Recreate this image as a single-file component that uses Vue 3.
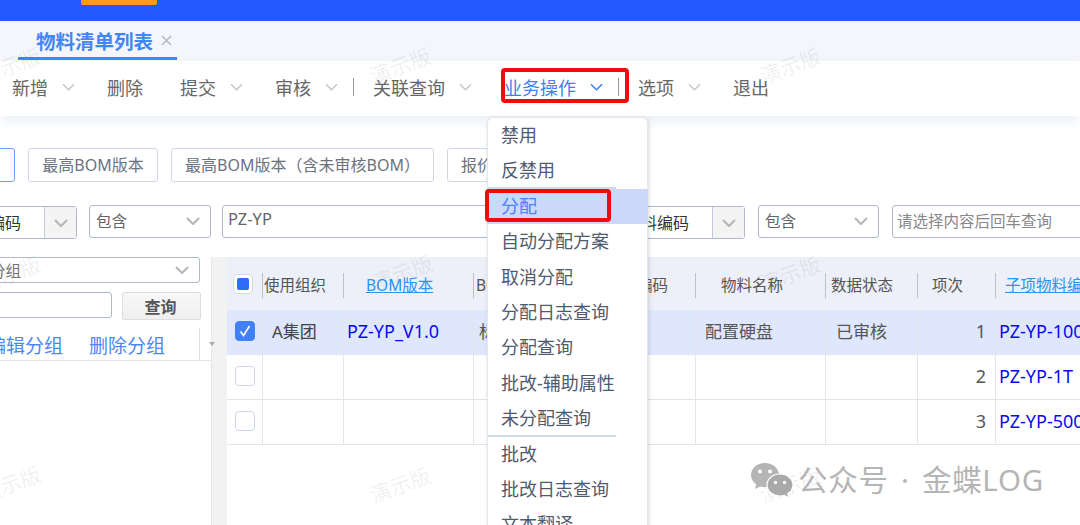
<script setup>
const toolbar = [
  { label: '新增', arrow: true },
  { label: '删除', plain: true },
  { label: '提交', arrow: true },
  { label: '审核', arrow: true, sep: true },
  { label: '关联查询', arrow: true },
  { label: '业务操作', arrow: true, active: true, sep: true },
  { label: '选项', arrow: true },
  { label: '退出' },
]

const menu = [
  { label: '禁用' },
  { label: '反禁用', line: true },
  { label: '分配', hover: true },
  { label: '自动分配方案' },
  { label: '取消分配' },
  { label: '分配日志查询' },
  { label: '分配查询' },
  { label: '批改-辅助属性' },
  { label: '未分配查询', line: true },
  { label: '批改' },
  { label: '批改日志查询' },
  { label: '文本翻译' },
]

const columns = [
  { key: 'check', width: 35 },
  { key: 'org', width: 81, title: '使用组织', pad: 2 },
  { key: 'bom', width: 130, title: 'BOM版本', pad: 23, link: true },
  { key: 'name1', width: 127, title: 'BOM简称', pad: 3 },
  { key: 'code', width: 95, title: '物料编码', pad: 6 },
  { key: 'name', width: 130, title: '物料名称', pad: 26 },
  { key: 'status', width: 92, title: '数据状态', pad: 6 },
  { key: 'seq', width: 78, title: '项次', pad: 15 },
  { key: 'child', width: 200, title: '子项物料编码', pad: 10, link: true },
]

const rows = [
  { id: 1, checked: true, org: 'A集团', bom: 'PZ-YP_V1.0', name1: '标准', name: '配置硬盘', status: '已审核', child: 'PZ-YP-100G' },
  { id: 2, child: 'PZ-YP-1T' },
  { id: 3, child: 'PZ-YP-500G' },
]

const marks = [
  [10, 65], [400, 65], [790, 65],
  [10, 273], [402, 272], [790, 273],
  [10, 483], [400, 484], [790, 484],
]
</script>

<template>
  <div class="page">
    <header class="topbar"><div class="topbar-tag" /></header>

    <div class="tabs">
      <div class="tab">
        <span>物料清单列表</span>
        <svg class="tab-close" width="11" height="11" viewBox="0 0 11 11"><path d="M1 1l9 9M10 1l-9 9" /></svg>
      </div>
    </div>

    <nav class="toolbar">
      <template v-for="item in toolbar" :key="item.label">
        <div class="tool" :class="{ active: item.active, plain: item.plain, 'has-sep': item.sep }">
          <span>{{ item.label }}</span>
          <svg v-if="item.arrow" class="chev" width="13" height="8" viewBox="0 0 14 8"><path d="M1 1l6 6 6-6" /></svg>
        </div>
        <i v-if="item.sep" class="tool-sep" />
      </template>
    </nav>

    <div class="btn-row">
      <button class="btn btn-first" />
      <button class="btn btn-top">最高BOM版本</button>
      <button class="btn btn-wide">最高BOM版本（含未审核BOM）</button>
      <button class="btn">报价BOM版本</button>
    </div>

    <div class="filter-row">
      <div class="field field-code">
        <span>物料编码</span>
        <div class="field-arrow"><svg class="chev-sm" width="14" height="8" viewBox="0 0 14 8"><path d="M1 1l6 6 6-6" /></svg></div>
      </div>
      <div class="field field-op">
        <span>包含</span>
        <svg class="chev-sm" width="14" height="8" viewBox="0 0 14 8"><path d="M1 1l6 6 6-6" /></svg>
      </div>
      <div class="field field-value"><span>PZ-YP</span></div>
      <div class="field field-code">
        <span>物料编码</span>
        <div class="field-arrow"><svg class="chev-sm" width="14" height="8" viewBox="0 0 14 8"><path d="M1 1l6 6 6-6" /></svg></div>
      </div>
      <div class="field field-op field-op2">
        <span>包含</span>
        <svg class="chev-sm" width="14" height="8" viewBox="0 0 14 8"><path d="M1 1l6 6 6-6" /></svg>
      </div>
      <div class="field field-search"><span>请选择内容后回车查询</span></div>
    </div>

    <div class="body-row">
      <aside class="side">
        <div class="side-select">
          <span>物料分组</span>
          <svg class="chev-sm" width="14" height="8" viewBox="0 0 14 8"><path d="M1 1l6 6 6-6" /></svg>
        </div>
        <div class="side-query">
          <div class="side-input" />
          <button class="side-btn">查询</button>
        </div>
        <div class="side-links">
          <a>编辑分组</a>
          <a>删除分组</a>
          <i class="side-grip" />
          <i class="side-tri" />
        </div>
      </aside>

      <div class="gutter" />

      <div class="grid-wrap">
        <table class="grid">
          <colgroup>
            <col v-for="c in columns" :key="c.key" :style="{ width: c.width + 'px' }" />
          </colgroup>
          <thead>
            <tr>
              <th v-for="c in columns" :key="c.key" :style="{ paddingLeft: (c.pad || 0) + 'px' }">
                <span v-if="c.key === 'check'" class="check-head"><i /></span>
                <span v-else :class="{ 'th-link': c.link }">{{ c.title }}</span>
              </th>
            </tr>
          </thead>
          <tbody>
            <tr v-for="r in rows" :key="r.id" :class="{ selected: r.checked }">
              <td class="td-check">
                <span class="check" :class="{ on: r.checked }">
                  <svg v-if="r.checked" width="14" height="14" viewBox="0 0 14 14"><path d="M2.5 7.500l3 4 6-9.500" /></svg>
                </span>
              </td>
              <td class="td-org">{{ r.org }}</td>
              <td class="td-bom">{{ r.bom }}</td>
              <td class="td-name1">{{ r.name1 }}</td>
              <td />
              <td class="td-name">{{ r.name }}</td>
              <td class="td-status">{{ r.status }}</td>
              <td class="td-seq">{{ r.id }}</td>
              <td class="td-child">{{ r.child }}</td>
            </tr>
          </tbody>
        </table>
      </div>
    </div>

    <ul class="menu">
      <li v-for="m in menu" :key="m.label" :class="{ hover: m.hover, line: m.line }">{{ m.label }}</li>
    </ul>

    <span
      v-for="(p, i) in marks"
      :key="i"
      class="mark"
      :style="{ left: p[0] + 'px', top: p[1] + 'px' }"
    >演示版</span>

    <i class="annot annot-tool" />
    <i class="annot annot-menu" />

    <div class="wechat">
      <svg width="44" height="36" viewBox="0 0 44 36">
        <path class="bubble" d="M15 1C7 1 1 6.500 1 13c0 3.800 2 7 5.300 9.300L5 27l5.300-2.600c1.500.4 3 .6 4.700.6 7.500 0 14-5.300 14-12S22.800 1 15 1z" />
        <circle class="eye" cx="10" cy="9.500" r="2" />
        <circle class="eye" cx="20" cy="9.500" r="2" />
        <path class="bubble bubble-front" d="M30 12c-7.200 0-13 4.800-13 11s5.800 11 13 11c1.500 0 3-.2 4.300-.6L39 36l-1.200-4.300C41 29.700 43 26.500 43 23c0-6.200-5.800-11-13-11z" />
        <circle class="eye" cx="25.500" cy="20.500" r="1.700" />
        <circle class="eye" cx="34.500" cy="20.500" r="1.700" />
      </svg>
      <span>公众号 · 金蝶LOG</span>
    </div>
  </div>
</template>

<style>
html, body { margin: 0; background: #fff; }
</style>

<style scoped>
.page {
  position: relative;
  display: flex;
  flex-direction: column;
  width: 1080px;
  height: 525px;
  overflow: hidden;
  background: #fff;
  color: #555;
  font-family: "Noto Sans", "Noto Sans CJK SC", sans-serif;
}

.topbar { flex: none; height: 21px; padding-left: 81px; background: #2459ff; box-sizing: border-box; }
.topbar-tag { width: 76px; height: 5px; background: #ff9a1a; border-radius: 0 0 2px 2px; }

.tabs { flex: none; height: 40px; background: #f4f6fb; }
.tab {
  display: flex;
  align-items: center;
  gap: 8px;
  box-sizing: border-box;
  width: 159px;
  height: 39px;
  margin-left: 18px;
  padding: 3px 0 0 18px;
  border-bottom: 3px solid #4285f4;
  color: #4285f4;
  font-size: 19.500px;
  font-weight: 700;
  white-space: nowrap;
}
.tab-close { flex: none; }
.tab-close path { fill: none; stroke: #b4b8c2; stroke-width: 1.500; }

.toolbar {
  position: relative;
  z-index: 1;
  flex: none;
  display: flex;
  align-items: center;
  box-sizing: border-box;
  height: 55px;
  padding: 0 0 4px 12px;
  background: #fff;
  box-shadow: 0 6px 10px rgba(190, 203, 232, 0.28);
  font-size: 18px;
  color: #666;
}
.tool { display: flex; align-items: center; margin-right: 32px; white-space: nowrap; }
.tool.plain { margin-right: 37px; }
.tool.has-sep { margin-right: 15px; }
.tool.active { color: #3f7ff5; }
.chev { margin-left: 14px; }
.chev path { fill: none; stroke: #c2c6ce; stroke-width: 1.600; }
.tool.active .chev path { stroke: #3f7ff5; }
.tool-sep { width: 1px; height: 18px; margin-right: 19px; background: #999; }

.btn-row {
  flex: none;
  display: flex;
  gap: 13px;
  height: 34px;
  margin: 32px 0 0 -40px;
}
.btn {
  flex: none;
  box-sizing: border-box;
  height: 34px;
  padding: 0 13px 2px;
  background: #fff;
  border: 1px solid #cfd7e6;
  border-radius: 3px;
  color: #6b7280;
  font: 16px "Noto Sans", "Noto Sans CJK SC", sans-serif;
  white-space: nowrap;
}
.btn-first { width: 55px; border-color: #6d9cf5; }
.btn-top { width: 130px; padding: 0 0 2px; }
.btn-wide { width: 263px; padding: 0 0 2px; }

.filter-row {
  flex: none;
  display: flex;
  gap: 12px;
  height: 33px;
  margin: 23px 0 0 -50px;
}
.field {
  flex: none;
  display: flex;
  align-items: center;
  box-sizing: border-box;
  height: 33px;
  padding: 0 0 2px 6px;
  background: #fff;
  border: 1px solid #b0b8cc;
  border-radius: 3px;
  font-size: 15.500px;
  color: #666;
  white-space: nowrap;
}
.field-code { position: relative; width: 127px; margin-top: 1px; color: #333; font-size: 16px; }
.field-arrow {
  position: absolute;
  top: 0;
  right: 0;
  bottom: 0;
  display: flex;
  align-items: center;
  justify-content: center;
  width: 31px;
  background: #f4f4f4;
  border-left: 1px solid #c6ccdb;
}
.field-op { justify-content: space-between; width: 122px; padding-right: 10px; }
.field-op2 { width: 121px; margin-left: 1px; }
.field-value { width: 384px; margin-left: -1px; padding: 0 0 6px 5px; font-size: 16.500px; }
.field-search { flex: 1; min-width: 200px; margin-left: 1px; padding-left: 4px; color: #888; }
.chev-sm path { fill: none; stroke: #b8b8b8; stroke-width: 2.200; }

.body-row { flex: 1; display: flex; min-height: 0; margin-top: 19px; }

.side { flex: none; position: relative; width: 211px; background: #fff; }
.side-select {
  display: flex;
  align-items: center;
  justify-content: space-between;
  box-sizing: border-box;
  width: 250px;
  height: 26px;
  margin-left: -50px;
  padding: 0 10px 0 8px;
  background: #fff;
  border: 1px solid #b0b8cc;
  border-radius: 3px;
  font-size: 15.500px;
  color: #777;
}
.side-query { display: flex; gap: 10px; margin: 9px 0 0 -50px; }
.side-input {
  flex: none;
  box-sizing: border-box;
  width: 162px;
  height: 26px;
  border: 1px solid #b0b8cc;
  border-radius: 3px;
}
.side-btn {
  flex: none;
  box-sizing: border-box;
  width: 79px;
  height: 28px;
  padding: 0 2px 0 0;
  background: linear-gradient(#f8f8f8, #efefef);
  border: 1px solid #ddd;
  border-radius: 2px;
  color: #555;
  font: 700 16px "Noto Sans", "Noto Sans CJK SC", sans-serif;
}
.side-links {
  position: relative;
  display: flex;
  align-items: center;
  gap: 26px;
  box-sizing: border-box;
  width: 224px;
  height: 33px;
  margin: 8px 0 0 -13px;
  padding-top: 2px;
  border-bottom: 1px solid #e4e4e4;
  color: #4b87f8;
  font-size: 19px;
  white-space: nowrap;
}
.side-grip { position: absolute; left: 212px; top: 0; bottom: 0; width: 1px; background: #e0e0e0; }
.side-tri { position: absolute; left: 222px; top: 14px; width: 0; height: 0; border: 3px solid transparent; border-top: 4px solid #aaa; border-bottom: 0; }

.gutter { flex: none; box-sizing: border-box; width: 16px; background: #f2f2f2; border-left: 1px solid #e6e6e6; }

.grid-wrap { flex: 1; min-width: 0; overflow: hidden; }
.grid {
  width: 968px;
  table-layout: fixed;
  border-collapse: separate;
  border-spacing: 0;
}
.grid th {
  position: relative;
  box-sizing: border-box;
  height: 53px;
  padding: 2px 0 0;
  background: #edf0f8;
  color: #555;
  font-size: 15.500px;
  font-weight: 400;
  text-align: left;
  white-space: nowrap;
  overflow: hidden;
}
.grid th + th::before {
  content: "";
  position: absolute;
  left: 0;
  top: 16px;
  width: 1px;
  height: 25px;
  background: #bcc0c8;
}
.th-link { color: #2b93f0; text-decoration: underline; }
.grid td {
  box-sizing: border-box;
  height: 45px;
  padding: 0 0 3px;
  border-bottom: 1px solid #e4e4e4;
  font-size: 17px;
  color: #555;
  white-space: nowrap;
  overflow: hidden;
}
.grid td + td { border-left: 1px solid #e6e6e6; }
.grid tr.selected td { background: #dfe7fd; border-bottom-color: #dfe7fd; }
.check-head {
  display: flex;
  align-items: center;
  justify-content: center;
  box-sizing: border-box;
  width: 20px;
  height: 20px;
  margin: -2px 0 0 6px;
  background: #fff;
  border: 1px solid #d4dbe8;
  border-radius: 4px;
}
.check-head i { width: 12px; height: 12px; background: #2f6df6; border-radius: 2px; }
.check {
  display: flex;
  align-items: center;
  justify-content: center;
  box-sizing: border-box;
  width: 20px;
  height: 20px;
  margin-left: 8px;
  background: #fff;
  border: 1px solid #cdd6e8;
  border-radius: 4px;
}
.check.on { background: #4080f8; border-color: #4080f8; }
.check path { fill: none; stroke: #fff; stroke-width: 1.600; }
.grid td.td-org { padding-left: 9px; color: #444; }
.grid td.td-bom { padding-left: 3px; color: #0a0af0; font-size: 18px; }
.grid td.td-name1 { padding-left: 5px; }
.grid td.td-name { padding-left: 9px; }
.grid td.td-status { padding-left: 10px; }
.grid td.td-seq { padding-right: 9px; text-align: right; font-size: 18px; }
.grid td.td-child { padding-left: 3px; color: #0a0af0; font-size: 18px; }

.menu {
  position: absolute;
  z-index: 3;
  left: 487px;
  top: 117px;
  box-sizing: border-box;
  width: 161px;
  height: 440px;
  margin: 0;
  padding: 0;
  list-style: none;
  background: #fff;
  border: 1px solid #e4e7ee;
  border-radius: 6px;
  box-shadow: 1px 1px 4px rgba(120, 130, 150, 0.3);
  color: #505a6e;
  font-size: 18px;
}
.menu li {
  position: relative;
  height: 35.400px;
  line-height: 34px;
  padding-left: 13px;
  white-space: nowrap;
}
.menu li.hover { margin: 0 -1px; padding-left: 14px; background: #cbd8fb; color: #4a80f8; line-height: 35.400px; }
.menu li.line::after {
  content: "";
  position: absolute;
  left: 0;
  bottom: 0;
  width: 128px;
  height: 2px;
  background: #d5dae8;
}

.mark {
  position: absolute;
  z-index: 2;
  transform: translate(-50%, -50%) rotate(-20deg);
  color: rgba(0, 0, 0, 0.07);
  font-size: 21px;
  pointer-events: none;
  white-space: nowrap;
}

.annot {
  position: absolute;
  z-index: 4;
  box-sizing: border-box;
  border: 4px solid #f40a0a;
  border-radius: 4px;
  pointer-events: none;
}
.annot-tool { left: 501px; top: 68px; width: 128px; height: 35px; }
.annot-menu { left: 485px; top: 189px; width: 126px; height: 33px; }

.wechat {
  position: absolute;
  z-index: 5;
  left: 750px;
  top: 462px;
  display: flex;
  align-items: center;
  gap: 8px;
  color: #b5b5b5;
  font-size: 29.500px;
  line-height: 36px;
  letter-spacing: 0.7px;
  word-spacing: 4px;
  white-space: nowrap;
}
.wechat svg { margin-right: -4px; }
.bubble { fill: #b5b5b5; }
.bubble-front { stroke: #fff; stroke-width: 1.200; fill: #a9a9a9; }
.eye { fill: #fff; }
</style>
